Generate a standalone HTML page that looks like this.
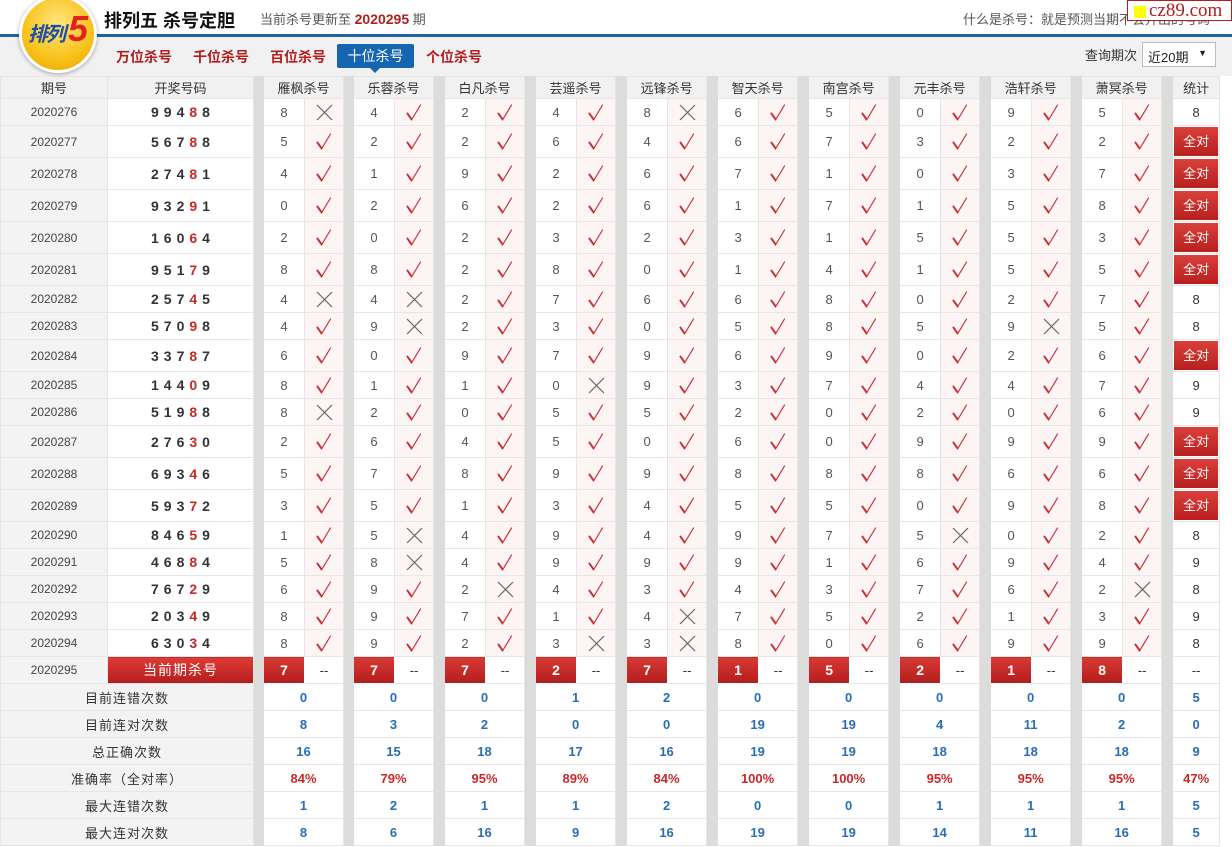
<!DOCTYPE html>
<html><head><meta charset="utf-8">
<style>
*{margin:0;padding:0;box-sizing:border-box}
body{width:1232px;height:847px;overflow:hidden;background:#fff;font-family:"Liberation Sans","Noto Sans CJK SC",sans-serif;position:relative}
.top{position:absolute;left:0;top:0;width:1232px;height:34px;background:#fff}
.bar{position:absolute;left:0;top:34px;width:1232px;height:3px;background:#1d64a0}
.sub{position:absolute;left:0;top:37px;width:1232px;height:39px;background:#f1f1f1}
.logo{position:absolute;left:19px;top:-5px;width:78px;height:78px;border-radius:50%;background:radial-gradient(circle at 50% 35%,#ffe680,#f7c21a 60%,#eaa400);border:3px solid #fff;box-shadow:0 1px 4px rgba(0,0,0,.35);z-index:3}
.logo span{position:absolute;left:6px;top:20px;font:italic bold 20px "Liberation Sans","Noto Sans CJK SC",sans-serif;color:#1d4fa5;letter-spacing:-2px}
.logo b{position:absolute;left:46px;top:10px;font:italic bold 36px "Liberation Sans",sans-serif;color:#e0231b}
.title{position:absolute;left:104px;top:7px;font-size:18px;font-weight:bold;color:#111}
.upd{position:absolute;left:260px;top:9px;font-size:13px;color:#555}
.upd b{color:#b01e1e;font-size:14px}
.what{position:absolute;left:963px;top:9px;font-size:13px;color:#555}
.cz{position:absolute;left:1127px;top:0;width:105px;height:21px;background:#fff;border:1px solid #b01e1e;font:19px "Liberation Serif",serif;color:#b01e1e;line-height:19px;padding-left:21px}
.cz:before{content:"";position:absolute;left:6px;top:5px;width:12px;height:12px;background:#ff0}
.nav{position:absolute;top:47px;font-size:14px;font-weight:bold;color:#b01e1e}
.act{position:absolute;left:337px;top:44px;width:77px;height:24px;background:#1565b0;color:#fff;font-size:14px;text-align:center;line-height:24px;border-radius:2px}
.act:after{content:"";position:absolute;left:33px;top:24px;border:5px solid transparent;border-top-color:#1565b0}
.q{position:absolute;left:1085px;top:45px;font-size:13px;color:#333}
.sel{position:absolute;left:1142px;top:42px;width:74px;height:25px;border:1px solid #bbb;background:#fff;font-size:13px;padding:4px 0 0 5px;color:#222}
.sel:after{content:"▼";position:absolute;right:8px;top:5px;font-size:9px}
table{position:absolute;left:0;top:76px;border-collapse:collapse;table-layout:fixed;width:1219px}
td{border:1px solid #e6e6e6;text-align:center;font-size:13px;color:#555;padding:0;overflow:hidden;white-space:nowrap}
td.g{background:#dcdcdc;border-color:#dcdcdc}
tr.hd td{background:#f1f1f1;color:#333;height:22px}
tr.hd td.g{background:#dcdcdc}
td.p{background:#f3f3f3;color:#444;font-size:12px}
td.d{background:#fff;font-weight:bold;font-size:14px;color:#333;letter-spacing:5px;padding-left:5px}
td.d b{color:#c62828}
td.n{background:#fff}
td.v,td.x{background:#fdf4f4}
td.v svg,td.x svg{display:block;margin:0 auto}
td.s{background:#fff;color:#333}
td.all{background:#fff;padding:1px}
td.all div{background:linear-gradient(#d9403a,#b91f1f);color:#fff;height:100%;line-height:29px;font-size:13px}
tr.a td{height:32px}
tr.b td{height:27px}
td.cur{background:linear-gradient(#dd3c36,#b31c1c);color:#fff;font-size:14px;letter-spacing:1px}
td.k{background:linear-gradient(#d83a34,#b21d1d);color:#fff;font-weight:bold;font-size:14px;border-color:#fff}
td.dd{background:#fff;color:#333}
td.L{background:#f3f3f3;color:#333;font-size:13px;letter-spacing:1px}
td.bl{background:#fff;color:#2a6db5;font-weight:bold;font-size:13px}
td.rd{background:#fff;color:#c62828;font-weight:bold;font-size:13px}
</style></head><body>
<svg width="0" height="0" style="position:absolute"><defs>
<g id="ck"><path d="M12 13.5 L16.5 20 L25.5 5" fill="none" stroke="#c8313a" stroke-width="1.2" stroke-linecap="round" stroke-linejoin="round"/><path d="M12.5 13.5 L16.5 19" fill="none" stroke="#c8313a" stroke-width="1.8" stroke-linecap="round"/></g>
<g id="cr"><path d="M12 5 L27 20 M27 5 L12 20" stroke="#666" stroke-width="1.2" fill="none"/></g>
</defs></svg>
<div class="top"></div><div class="bar"></div><div class="sub"></div>
<div class="logo"><span>排列</span><b>5</b></div>
<div class="title">排列五 杀号定胆</div>
<div class="upd">当前杀号更新至 <b>2020295</b> 期</div>
<div class="what">什么是杀号：就是预测当期不会开出的号码</div>
<div class="cz">cz89.com</div>
<div class="nav" style="left:116px">万位杀号</div>
<div class="nav" style="left:193px">千位杀号</div>
<div class="nav" style="left:270px">百位杀号</div>
<div class="act">十位杀号</div>
<div class="nav" style="left:426px">个位杀号</div>
<div class="q">查询期次</div>
<div class="sel">近20期</div>
<table>
<colgroup><col style="width:107px"><col style="width:146px"><col style="width:10px">
<col style="width:41px"><col style="width:39px"><col style="width:10px">
<col style="width:41px"><col style="width:39px"><col style="width:11px">
<col style="width:41px"><col style="width:39px"><col style="width:11px">
<col style="width:41px"><col style="width:39px"><col style="width:11px">
<col style="width:41px"><col style="width:39px"><col style="width:11px">
<col style="width:41px"><col style="width:39px"><col style="width:11px">
<col style="width:41px"><col style="width:39px"><col style="width:11px">
<col style="width:41px"><col style="width:39px"><col style="width:11px">
<col style="width:41px"><col style="width:39px"><col style="width:11px">
<col style="width:41px"><col style="width:39px"><col style="width:11px">
<col style="width:47px"></colgroup>
<tr class="hd"><td>期号</td><td>开奖号码</td><td class="g"></td><td colspan="2">雁枫杀号</td><td class="g"></td><td colspan="2">乐蓉杀号</td><td class="g"></td><td colspan="2">白凡杀号</td><td class="g"></td><td colspan="2">芸遥杀号</td><td class="g"></td><td colspan="2">远锋杀号</td><td class="g"></td><td colspan="2">智天杀号</td><td class="g"></td><td colspan="2">南宫杀号</td><td class="g"></td><td colspan="2">元丰杀号</td><td class="g"></td><td colspan="2">浩轩杀号</td><td class="g"></td><td colspan="2">萧冥杀号</td><td class="g"></td><td>统计</td></tr>
<tr class="b"><td class="p">2020276</td><td class="d">994<b>8</b>8</td><td class="g"></td><td class="n">8</td><td class="x"><svg width="39" height="25"><use href="#cr"/></svg></td><td class="g"></td><td class="n">4</td><td class="v"><svg width="39" height="25"><use href="#ck"/></svg></td><td class="g"></td><td class="n">2</td><td class="v"><svg width="39" height="25"><use href="#ck"/></svg></td><td class="g"></td><td class="n">4</td><td class="v"><svg width="39" height="25"><use href="#ck"/></svg></td><td class="g"></td><td class="n">8</td><td class="x"><svg width="39" height="25"><use href="#cr"/></svg></td><td class="g"></td><td class="n">6</td><td class="v"><svg width="39" height="25"><use href="#ck"/></svg></td><td class="g"></td><td class="n">5</td><td class="v"><svg width="39" height="25"><use href="#ck"/></svg></td><td class="g"></td><td class="n">0</td><td class="v"><svg width="39" height="25"><use href="#ck"/></svg></td><td class="g"></td><td class="n">9</td><td class="v"><svg width="39" height="25"><use href="#ck"/></svg></td><td class="g"></td><td class="n">5</td><td class="v"><svg width="39" height="25"><use href="#ck"/></svg></td><td class="g"></td><td class="s">8</td></tr>
<tr class="a"><td class="p">2020277</td><td class="d">567<b>8</b>8</td><td class="g"></td><td class="n">5</td><td class="v"><svg width="39" height="25"><use href="#ck"/></svg></td><td class="g"></td><td class="n">2</td><td class="v"><svg width="39" height="25"><use href="#ck"/></svg></td><td class="g"></td><td class="n">2</td><td class="v"><svg width="39" height="25"><use href="#ck"/></svg></td><td class="g"></td><td class="n">6</td><td class="v"><svg width="39" height="25"><use href="#ck"/></svg></td><td class="g"></td><td class="n">4</td><td class="v"><svg width="39" height="25"><use href="#ck"/></svg></td><td class="g"></td><td class="n">6</td><td class="v"><svg width="39" height="25"><use href="#ck"/></svg></td><td class="g"></td><td class="n">7</td><td class="v"><svg width="39" height="25"><use href="#ck"/></svg></td><td class="g"></td><td class="n">3</td><td class="v"><svg width="39" height="25"><use href="#ck"/></svg></td><td class="g"></td><td class="n">2</td><td class="v"><svg width="39" height="25"><use href="#ck"/></svg></td><td class="g"></td><td class="n">2</td><td class="v"><svg width="39" height="25"><use href="#ck"/></svg></td><td class="g"></td><td class="all"><div>全对</div></td></tr>
<tr class="a"><td class="p">2020278</td><td class="d">274<b>8</b>1</td><td class="g"></td><td class="n">4</td><td class="v"><svg width="39" height="25"><use href="#ck"/></svg></td><td class="g"></td><td class="n">1</td><td class="v"><svg width="39" height="25"><use href="#ck"/></svg></td><td class="g"></td><td class="n">9</td><td class="v"><svg width="39" height="25"><use href="#ck"/></svg></td><td class="g"></td><td class="n">2</td><td class="v"><svg width="39" height="25"><use href="#ck"/></svg></td><td class="g"></td><td class="n">6</td><td class="v"><svg width="39" height="25"><use href="#ck"/></svg></td><td class="g"></td><td class="n">7</td><td class="v"><svg width="39" height="25"><use href="#ck"/></svg></td><td class="g"></td><td class="n">1</td><td class="v"><svg width="39" height="25"><use href="#ck"/></svg></td><td class="g"></td><td class="n">0</td><td class="v"><svg width="39" height="25"><use href="#ck"/></svg></td><td class="g"></td><td class="n">3</td><td class="v"><svg width="39" height="25"><use href="#ck"/></svg></td><td class="g"></td><td class="n">7</td><td class="v"><svg width="39" height="25"><use href="#ck"/></svg></td><td class="g"></td><td class="all"><div>全对</div></td></tr>
<tr class="a"><td class="p">2020279</td><td class="d">932<b>9</b>1</td><td class="g"></td><td class="n">0</td><td class="v"><svg width="39" height="25"><use href="#ck"/></svg></td><td class="g"></td><td class="n">2</td><td class="v"><svg width="39" height="25"><use href="#ck"/></svg></td><td class="g"></td><td class="n">6</td><td class="v"><svg width="39" height="25"><use href="#ck"/></svg></td><td class="g"></td><td class="n">2</td><td class="v"><svg width="39" height="25"><use href="#ck"/></svg></td><td class="g"></td><td class="n">6</td><td class="v"><svg width="39" height="25"><use href="#ck"/></svg></td><td class="g"></td><td class="n">1</td><td class="v"><svg width="39" height="25"><use href="#ck"/></svg></td><td class="g"></td><td class="n">7</td><td class="v"><svg width="39" height="25"><use href="#ck"/></svg></td><td class="g"></td><td class="n">1</td><td class="v"><svg width="39" height="25"><use href="#ck"/></svg></td><td class="g"></td><td class="n">5</td><td class="v"><svg width="39" height="25"><use href="#ck"/></svg></td><td class="g"></td><td class="n">8</td><td class="v"><svg width="39" height="25"><use href="#ck"/></svg></td><td class="g"></td><td class="all"><div>全对</div></td></tr>
<tr class="a"><td class="p">2020280</td><td class="d">160<b>6</b>4</td><td class="g"></td><td class="n">2</td><td class="v"><svg width="39" height="25"><use href="#ck"/></svg></td><td class="g"></td><td class="n">0</td><td class="v"><svg width="39" height="25"><use href="#ck"/></svg></td><td class="g"></td><td class="n">2</td><td class="v"><svg width="39" height="25"><use href="#ck"/></svg></td><td class="g"></td><td class="n">3</td><td class="v"><svg width="39" height="25"><use href="#ck"/></svg></td><td class="g"></td><td class="n">2</td><td class="v"><svg width="39" height="25"><use href="#ck"/></svg></td><td class="g"></td><td class="n">3</td><td class="v"><svg width="39" height="25"><use href="#ck"/></svg></td><td class="g"></td><td class="n">1</td><td class="v"><svg width="39" height="25"><use href="#ck"/></svg></td><td class="g"></td><td class="n">5</td><td class="v"><svg width="39" height="25"><use href="#ck"/></svg></td><td class="g"></td><td class="n">5</td><td class="v"><svg width="39" height="25"><use href="#ck"/></svg></td><td class="g"></td><td class="n">3</td><td class="v"><svg width="39" height="25"><use href="#ck"/></svg></td><td class="g"></td><td class="all"><div>全对</div></td></tr>
<tr class="a"><td class="p">2020281</td><td class="d">951<b>7</b>9</td><td class="g"></td><td class="n">8</td><td class="v"><svg width="39" height="25"><use href="#ck"/></svg></td><td class="g"></td><td class="n">8</td><td class="v"><svg width="39" height="25"><use href="#ck"/></svg></td><td class="g"></td><td class="n">2</td><td class="v"><svg width="39" height="25"><use href="#ck"/></svg></td><td class="g"></td><td class="n">8</td><td class="v"><svg width="39" height="25"><use href="#ck"/></svg></td><td class="g"></td><td class="n">0</td><td class="v"><svg width="39" height="25"><use href="#ck"/></svg></td><td class="g"></td><td class="n">1</td><td class="v"><svg width="39" height="25"><use href="#ck"/></svg></td><td class="g"></td><td class="n">4</td><td class="v"><svg width="39" height="25"><use href="#ck"/></svg></td><td class="g"></td><td class="n">1</td><td class="v"><svg width="39" height="25"><use href="#ck"/></svg></td><td class="g"></td><td class="n">5</td><td class="v"><svg width="39" height="25"><use href="#ck"/></svg></td><td class="g"></td><td class="n">5</td><td class="v"><svg width="39" height="25"><use href="#ck"/></svg></td><td class="g"></td><td class="all"><div>全对</div></td></tr>
<tr class="b"><td class="p">2020282</td><td class="d">257<b>4</b>5</td><td class="g"></td><td class="n">4</td><td class="x"><svg width="39" height="25"><use href="#cr"/></svg></td><td class="g"></td><td class="n">4</td><td class="x"><svg width="39" height="25"><use href="#cr"/></svg></td><td class="g"></td><td class="n">2</td><td class="v"><svg width="39" height="25"><use href="#ck"/></svg></td><td class="g"></td><td class="n">7</td><td class="v"><svg width="39" height="25"><use href="#ck"/></svg></td><td class="g"></td><td class="n">6</td><td class="v"><svg width="39" height="25"><use href="#ck"/></svg></td><td class="g"></td><td class="n">6</td><td class="v"><svg width="39" height="25"><use href="#ck"/></svg></td><td class="g"></td><td class="n">8</td><td class="v"><svg width="39" height="25"><use href="#ck"/></svg></td><td class="g"></td><td class="n">0</td><td class="v"><svg width="39" height="25"><use href="#ck"/></svg></td><td class="g"></td><td class="n">2</td><td class="v"><svg width="39" height="25"><use href="#ck"/></svg></td><td class="g"></td><td class="n">7</td><td class="v"><svg width="39" height="25"><use href="#ck"/></svg></td><td class="g"></td><td class="s">8</td></tr>
<tr class="b"><td class="p">2020283</td><td class="d">570<b>9</b>8</td><td class="g"></td><td class="n">4</td><td class="v"><svg width="39" height="25"><use href="#ck"/></svg></td><td class="g"></td><td class="n">9</td><td class="x"><svg width="39" height="25"><use href="#cr"/></svg></td><td class="g"></td><td class="n">2</td><td class="v"><svg width="39" height="25"><use href="#ck"/></svg></td><td class="g"></td><td class="n">3</td><td class="v"><svg width="39" height="25"><use href="#ck"/></svg></td><td class="g"></td><td class="n">0</td><td class="v"><svg width="39" height="25"><use href="#ck"/></svg></td><td class="g"></td><td class="n">5</td><td class="v"><svg width="39" height="25"><use href="#ck"/></svg></td><td class="g"></td><td class="n">8</td><td class="v"><svg width="39" height="25"><use href="#ck"/></svg></td><td class="g"></td><td class="n">5</td><td class="v"><svg width="39" height="25"><use href="#ck"/></svg></td><td class="g"></td><td class="n">9</td><td class="x"><svg width="39" height="25"><use href="#cr"/></svg></td><td class="g"></td><td class="n">5</td><td class="v"><svg width="39" height="25"><use href="#ck"/></svg></td><td class="g"></td><td class="s">8</td></tr>
<tr class="a"><td class="p">2020284</td><td class="d">337<b>8</b>7</td><td class="g"></td><td class="n">6</td><td class="v"><svg width="39" height="25"><use href="#ck"/></svg></td><td class="g"></td><td class="n">0</td><td class="v"><svg width="39" height="25"><use href="#ck"/></svg></td><td class="g"></td><td class="n">9</td><td class="v"><svg width="39" height="25"><use href="#ck"/></svg></td><td class="g"></td><td class="n">7</td><td class="v"><svg width="39" height="25"><use href="#ck"/></svg></td><td class="g"></td><td class="n">9</td><td class="v"><svg width="39" height="25"><use href="#ck"/></svg></td><td class="g"></td><td class="n">6</td><td class="v"><svg width="39" height="25"><use href="#ck"/></svg></td><td class="g"></td><td class="n">9</td><td class="v"><svg width="39" height="25"><use href="#ck"/></svg></td><td class="g"></td><td class="n">0</td><td class="v"><svg width="39" height="25"><use href="#ck"/></svg></td><td class="g"></td><td class="n">2</td><td class="v"><svg width="39" height="25"><use href="#ck"/></svg></td><td class="g"></td><td class="n">6</td><td class="v"><svg width="39" height="25"><use href="#ck"/></svg></td><td class="g"></td><td class="all"><div>全对</div></td></tr>
<tr class="b"><td class="p">2020285</td><td class="d">144<b>0</b>9</td><td class="g"></td><td class="n">8</td><td class="v"><svg width="39" height="25"><use href="#ck"/></svg></td><td class="g"></td><td class="n">1</td><td class="v"><svg width="39" height="25"><use href="#ck"/></svg></td><td class="g"></td><td class="n">1</td><td class="v"><svg width="39" height="25"><use href="#ck"/></svg></td><td class="g"></td><td class="n">0</td><td class="x"><svg width="39" height="25"><use href="#cr"/></svg></td><td class="g"></td><td class="n">9</td><td class="v"><svg width="39" height="25"><use href="#ck"/></svg></td><td class="g"></td><td class="n">3</td><td class="v"><svg width="39" height="25"><use href="#ck"/></svg></td><td class="g"></td><td class="n">7</td><td class="v"><svg width="39" height="25"><use href="#ck"/></svg></td><td class="g"></td><td class="n">4</td><td class="v"><svg width="39" height="25"><use href="#ck"/></svg></td><td class="g"></td><td class="n">4</td><td class="v"><svg width="39" height="25"><use href="#ck"/></svg></td><td class="g"></td><td class="n">7</td><td class="v"><svg width="39" height="25"><use href="#ck"/></svg></td><td class="g"></td><td class="s">9</td></tr>
<tr class="b"><td class="p">2020286</td><td class="d">519<b>8</b>8</td><td class="g"></td><td class="n">8</td><td class="x"><svg width="39" height="25"><use href="#cr"/></svg></td><td class="g"></td><td class="n">2</td><td class="v"><svg width="39" height="25"><use href="#ck"/></svg></td><td class="g"></td><td class="n">0</td><td class="v"><svg width="39" height="25"><use href="#ck"/></svg></td><td class="g"></td><td class="n">5</td><td class="v"><svg width="39" height="25"><use href="#ck"/></svg></td><td class="g"></td><td class="n">5</td><td class="v"><svg width="39" height="25"><use href="#ck"/></svg></td><td class="g"></td><td class="n">2</td><td class="v"><svg width="39" height="25"><use href="#ck"/></svg></td><td class="g"></td><td class="n">0</td><td class="v"><svg width="39" height="25"><use href="#ck"/></svg></td><td class="g"></td><td class="n">2</td><td class="v"><svg width="39" height="25"><use href="#ck"/></svg></td><td class="g"></td><td class="n">0</td><td class="v"><svg width="39" height="25"><use href="#ck"/></svg></td><td class="g"></td><td class="n">6</td><td class="v"><svg width="39" height="25"><use href="#ck"/></svg></td><td class="g"></td><td class="s">9</td></tr>
<tr class="a"><td class="p">2020287</td><td class="d">276<b>3</b>0</td><td class="g"></td><td class="n">2</td><td class="v"><svg width="39" height="25"><use href="#ck"/></svg></td><td class="g"></td><td class="n">6</td><td class="v"><svg width="39" height="25"><use href="#ck"/></svg></td><td class="g"></td><td class="n">4</td><td class="v"><svg width="39" height="25"><use href="#ck"/></svg></td><td class="g"></td><td class="n">5</td><td class="v"><svg width="39" height="25"><use href="#ck"/></svg></td><td class="g"></td><td class="n">0</td><td class="v"><svg width="39" height="25"><use href="#ck"/></svg></td><td class="g"></td><td class="n">6</td><td class="v"><svg width="39" height="25"><use href="#ck"/></svg></td><td class="g"></td><td class="n">0</td><td class="v"><svg width="39" height="25"><use href="#ck"/></svg></td><td class="g"></td><td class="n">9</td><td class="v"><svg width="39" height="25"><use href="#ck"/></svg></td><td class="g"></td><td class="n">9</td><td class="v"><svg width="39" height="25"><use href="#ck"/></svg></td><td class="g"></td><td class="n">9</td><td class="v"><svg width="39" height="25"><use href="#ck"/></svg></td><td class="g"></td><td class="all"><div>全对</div></td></tr>
<tr class="a"><td class="p">2020288</td><td class="d">693<b>4</b>6</td><td class="g"></td><td class="n">5</td><td class="v"><svg width="39" height="25"><use href="#ck"/></svg></td><td class="g"></td><td class="n">7</td><td class="v"><svg width="39" height="25"><use href="#ck"/></svg></td><td class="g"></td><td class="n">8</td><td class="v"><svg width="39" height="25"><use href="#ck"/></svg></td><td class="g"></td><td class="n">9</td><td class="v"><svg width="39" height="25"><use href="#ck"/></svg></td><td class="g"></td><td class="n">9</td><td class="v"><svg width="39" height="25"><use href="#ck"/></svg></td><td class="g"></td><td class="n">8</td><td class="v"><svg width="39" height="25"><use href="#ck"/></svg></td><td class="g"></td><td class="n">8</td><td class="v"><svg width="39" height="25"><use href="#ck"/></svg></td><td class="g"></td><td class="n">8</td><td class="v"><svg width="39" height="25"><use href="#ck"/></svg></td><td class="g"></td><td class="n">6</td><td class="v"><svg width="39" height="25"><use href="#ck"/></svg></td><td class="g"></td><td class="n">6</td><td class="v"><svg width="39" height="25"><use href="#ck"/></svg></td><td class="g"></td><td class="all"><div>全对</div></td></tr>
<tr class="a"><td class="p">2020289</td><td class="d">593<b>7</b>2</td><td class="g"></td><td class="n">3</td><td class="v"><svg width="39" height="25"><use href="#ck"/></svg></td><td class="g"></td><td class="n">5</td><td class="v"><svg width="39" height="25"><use href="#ck"/></svg></td><td class="g"></td><td class="n">1</td><td class="v"><svg width="39" height="25"><use href="#ck"/></svg></td><td class="g"></td><td class="n">3</td><td class="v"><svg width="39" height="25"><use href="#ck"/></svg></td><td class="g"></td><td class="n">4</td><td class="v"><svg width="39" height="25"><use href="#ck"/></svg></td><td class="g"></td><td class="n">5</td><td class="v"><svg width="39" height="25"><use href="#ck"/></svg></td><td class="g"></td><td class="n">5</td><td class="v"><svg width="39" height="25"><use href="#ck"/></svg></td><td class="g"></td><td class="n">0</td><td class="v"><svg width="39" height="25"><use href="#ck"/></svg></td><td class="g"></td><td class="n">9</td><td class="v"><svg width="39" height="25"><use href="#ck"/></svg></td><td class="g"></td><td class="n">8</td><td class="v"><svg width="39" height="25"><use href="#ck"/></svg></td><td class="g"></td><td class="all"><div>全对</div></td></tr>
<tr class="b"><td class="p">2020290</td><td class="d">846<b>5</b>9</td><td class="g"></td><td class="n">1</td><td class="v"><svg width="39" height="25"><use href="#ck"/></svg></td><td class="g"></td><td class="n">5</td><td class="x"><svg width="39" height="25"><use href="#cr"/></svg></td><td class="g"></td><td class="n">4</td><td class="v"><svg width="39" height="25"><use href="#ck"/></svg></td><td class="g"></td><td class="n">9</td><td class="v"><svg width="39" height="25"><use href="#ck"/></svg></td><td class="g"></td><td class="n">4</td><td class="v"><svg width="39" height="25"><use href="#ck"/></svg></td><td class="g"></td><td class="n">9</td><td class="v"><svg width="39" height="25"><use href="#ck"/></svg></td><td class="g"></td><td class="n">7</td><td class="v"><svg width="39" height="25"><use href="#ck"/></svg></td><td class="g"></td><td class="n">5</td><td class="x"><svg width="39" height="25"><use href="#cr"/></svg></td><td class="g"></td><td class="n">0</td><td class="v"><svg width="39" height="25"><use href="#ck"/></svg></td><td class="g"></td><td class="n">2</td><td class="v"><svg width="39" height="25"><use href="#ck"/></svg></td><td class="g"></td><td class="s">8</td></tr>
<tr class="b"><td class="p">2020291</td><td class="d">468<b>8</b>4</td><td class="g"></td><td class="n">5</td><td class="v"><svg width="39" height="25"><use href="#ck"/></svg></td><td class="g"></td><td class="n">8</td><td class="x"><svg width="39" height="25"><use href="#cr"/></svg></td><td class="g"></td><td class="n">4</td><td class="v"><svg width="39" height="25"><use href="#ck"/></svg></td><td class="g"></td><td class="n">9</td><td class="v"><svg width="39" height="25"><use href="#ck"/></svg></td><td class="g"></td><td class="n">9</td><td class="v"><svg width="39" height="25"><use href="#ck"/></svg></td><td class="g"></td><td class="n">9</td><td class="v"><svg width="39" height="25"><use href="#ck"/></svg></td><td class="g"></td><td class="n">1</td><td class="v"><svg width="39" height="25"><use href="#ck"/></svg></td><td class="g"></td><td class="n">6</td><td class="v"><svg width="39" height="25"><use href="#ck"/></svg></td><td class="g"></td><td class="n">9</td><td class="v"><svg width="39" height="25"><use href="#ck"/></svg></td><td class="g"></td><td class="n">4</td><td class="v"><svg width="39" height="25"><use href="#ck"/></svg></td><td class="g"></td><td class="s">9</td></tr>
<tr class="b"><td class="p">2020292</td><td class="d">767<b>2</b>9</td><td class="g"></td><td class="n">6</td><td class="v"><svg width="39" height="25"><use href="#ck"/></svg></td><td class="g"></td><td class="n">9</td><td class="v"><svg width="39" height="25"><use href="#ck"/></svg></td><td class="g"></td><td class="n">2</td><td class="x"><svg width="39" height="25"><use href="#cr"/></svg></td><td class="g"></td><td class="n">4</td><td class="v"><svg width="39" height="25"><use href="#ck"/></svg></td><td class="g"></td><td class="n">3</td><td class="v"><svg width="39" height="25"><use href="#ck"/></svg></td><td class="g"></td><td class="n">4</td><td class="v"><svg width="39" height="25"><use href="#ck"/></svg></td><td class="g"></td><td class="n">3</td><td class="v"><svg width="39" height="25"><use href="#ck"/></svg></td><td class="g"></td><td class="n">7</td><td class="v"><svg width="39" height="25"><use href="#ck"/></svg></td><td class="g"></td><td class="n">6</td><td class="v"><svg width="39" height="25"><use href="#ck"/></svg></td><td class="g"></td><td class="n">2</td><td class="x"><svg width="39" height="25"><use href="#cr"/></svg></td><td class="g"></td><td class="s">8</td></tr>
<tr class="b"><td class="p">2020293</td><td class="d">203<b>4</b>9</td><td class="g"></td><td class="n">8</td><td class="v"><svg width="39" height="25"><use href="#ck"/></svg></td><td class="g"></td><td class="n">9</td><td class="v"><svg width="39" height="25"><use href="#ck"/></svg></td><td class="g"></td><td class="n">7</td><td class="v"><svg width="39" height="25"><use href="#ck"/></svg></td><td class="g"></td><td class="n">1</td><td class="v"><svg width="39" height="25"><use href="#ck"/></svg></td><td class="g"></td><td class="n">4</td><td class="x"><svg width="39" height="25"><use href="#cr"/></svg></td><td class="g"></td><td class="n">7</td><td class="v"><svg width="39" height="25"><use href="#ck"/></svg></td><td class="g"></td><td class="n">5</td><td class="v"><svg width="39" height="25"><use href="#ck"/></svg></td><td class="g"></td><td class="n">2</td><td class="v"><svg width="39" height="25"><use href="#ck"/></svg></td><td class="g"></td><td class="n">1</td><td class="v"><svg width="39" height="25"><use href="#ck"/></svg></td><td class="g"></td><td class="n">3</td><td class="v"><svg width="39" height="25"><use href="#ck"/></svg></td><td class="g"></td><td class="s">9</td></tr>
<tr class="b"><td class="p">2020294</td><td class="d">630<b>3</b>4</td><td class="g"></td><td class="n">8</td><td class="v"><svg width="39" height="25"><use href="#ck"/></svg></td><td class="g"></td><td class="n">9</td><td class="v"><svg width="39" height="25"><use href="#ck"/></svg></td><td class="g"></td><td class="n">2</td><td class="v"><svg width="39" height="25"><use href="#ck"/></svg></td><td class="g"></td><td class="n">3</td><td class="x"><svg width="39" height="25"><use href="#cr"/></svg></td><td class="g"></td><td class="n">3</td><td class="x"><svg width="39" height="25"><use href="#cr"/></svg></td><td class="g"></td><td class="n">8</td><td class="v"><svg width="39" height="25"><use href="#ck"/></svg></td><td class="g"></td><td class="n">0</td><td class="v"><svg width="39" height="25"><use href="#ck"/></svg></td><td class="g"></td><td class="n">6</td><td class="v"><svg width="39" height="25"><use href="#ck"/></svg></td><td class="g"></td><td class="n">9</td><td class="v"><svg width="39" height="25"><use href="#ck"/></svg></td><td class="g"></td><td class="n">9</td><td class="v"><svg width="39" height="25"><use href="#ck"/></svg></td><td class="g"></td><td class="s">8</td></tr>
<tr class="b"><td class="p">2020295</td><td class="cur">当前期杀号</td><td class="g"></td><td class="k">7</td><td class="dd">--</td><td class="g"></td><td class="k">7</td><td class="dd">--</td><td class="g"></td><td class="k">7</td><td class="dd">--</td><td class="g"></td><td class="k">2</td><td class="dd">--</td><td class="g"></td><td class="k">7</td><td class="dd">--</td><td class="g"></td><td class="k">1</td><td class="dd">--</td><td class="g"></td><td class="k">5</td><td class="dd">--</td><td class="g"></td><td class="k">2</td><td class="dd">--</td><td class="g"></td><td class="k">1</td><td class="dd">--</td><td class="g"></td><td class="k">8</td><td class="dd">--</td><td class="g"></td><td class="dd">--</td></tr>
<tr class="b"><td class="L" colspan="2">目前连错次数</td><td class="g"></td><td class="bl" colspan="2">0</td><td class="g"></td><td class="bl" colspan="2">0</td><td class="g"></td><td class="bl" colspan="2">0</td><td class="g"></td><td class="bl" colspan="2">1</td><td class="g"></td><td class="bl" colspan="2">2</td><td class="g"></td><td class="bl" colspan="2">0</td><td class="g"></td><td class="bl" colspan="2">0</td><td class="g"></td><td class="bl" colspan="2">0</td><td class="g"></td><td class="bl" colspan="2">0</td><td class="g"></td><td class="bl" colspan="2">0</td><td class="g"></td><td class="bl">5</td></tr>
<tr class="b"><td class="L" colspan="2">目前连对次数</td><td class="g"></td><td class="bl" colspan="2">8</td><td class="g"></td><td class="bl" colspan="2">3</td><td class="g"></td><td class="bl" colspan="2">2</td><td class="g"></td><td class="bl" colspan="2">0</td><td class="g"></td><td class="bl" colspan="2">0</td><td class="g"></td><td class="bl" colspan="2">19</td><td class="g"></td><td class="bl" colspan="2">19</td><td class="g"></td><td class="bl" colspan="2">4</td><td class="g"></td><td class="bl" colspan="2">11</td><td class="g"></td><td class="bl" colspan="2">2</td><td class="g"></td><td class="bl">0</td></tr>
<tr class="b"><td class="L" colspan="2">总正确次数</td><td class="g"></td><td class="bl" colspan="2">16</td><td class="g"></td><td class="bl" colspan="2">15</td><td class="g"></td><td class="bl" colspan="2">18</td><td class="g"></td><td class="bl" colspan="2">17</td><td class="g"></td><td class="bl" colspan="2">16</td><td class="g"></td><td class="bl" colspan="2">19</td><td class="g"></td><td class="bl" colspan="2">19</td><td class="g"></td><td class="bl" colspan="2">18</td><td class="g"></td><td class="bl" colspan="2">18</td><td class="g"></td><td class="bl" colspan="2">18</td><td class="g"></td><td class="bl">9</td></tr>
<tr class="b"><td class="L" colspan="2">准确率（全对率）</td><td class="g"></td><td class="rd" colspan="2">84%</td><td class="g"></td><td class="rd" colspan="2">79%</td><td class="g"></td><td class="rd" colspan="2">95%</td><td class="g"></td><td class="rd" colspan="2">89%</td><td class="g"></td><td class="rd" colspan="2">84%</td><td class="g"></td><td class="rd" colspan="2">100%</td><td class="g"></td><td class="rd" colspan="2">100%</td><td class="g"></td><td class="rd" colspan="2">95%</td><td class="g"></td><td class="rd" colspan="2">95%</td><td class="g"></td><td class="rd" colspan="2">95%</td><td class="g"></td><td class="rd">47%</td></tr>
<tr class="b"><td class="L" colspan="2">最大连错次数</td><td class="g"></td><td class="bl" colspan="2">1</td><td class="g"></td><td class="bl" colspan="2">2</td><td class="g"></td><td class="bl" colspan="2">1</td><td class="g"></td><td class="bl" colspan="2">1</td><td class="g"></td><td class="bl" colspan="2">2</td><td class="g"></td><td class="bl" colspan="2">0</td><td class="g"></td><td class="bl" colspan="2">0</td><td class="g"></td><td class="bl" colspan="2">1</td><td class="g"></td><td class="bl" colspan="2">1</td><td class="g"></td><td class="bl" colspan="2">1</td><td class="g"></td><td class="bl">5</td></tr>
<tr class="b"><td class="L" colspan="2">最大连对次数</td><td class="g"></td><td class="bl" colspan="2">8</td><td class="g"></td><td class="bl" colspan="2">6</td><td class="g"></td><td class="bl" colspan="2">16</td><td class="g"></td><td class="bl" colspan="2">9</td><td class="g"></td><td class="bl" colspan="2">16</td><td class="g"></td><td class="bl" colspan="2">19</td><td class="g"></td><td class="bl" colspan="2">19</td><td class="g"></td><td class="bl" colspan="2">14</td><td class="g"></td><td class="bl" colspan="2">11</td><td class="g"></td><td class="bl" colspan="2">16</td><td class="g"></td><td class="bl">5</td></tr>
</table>
</body></html>
